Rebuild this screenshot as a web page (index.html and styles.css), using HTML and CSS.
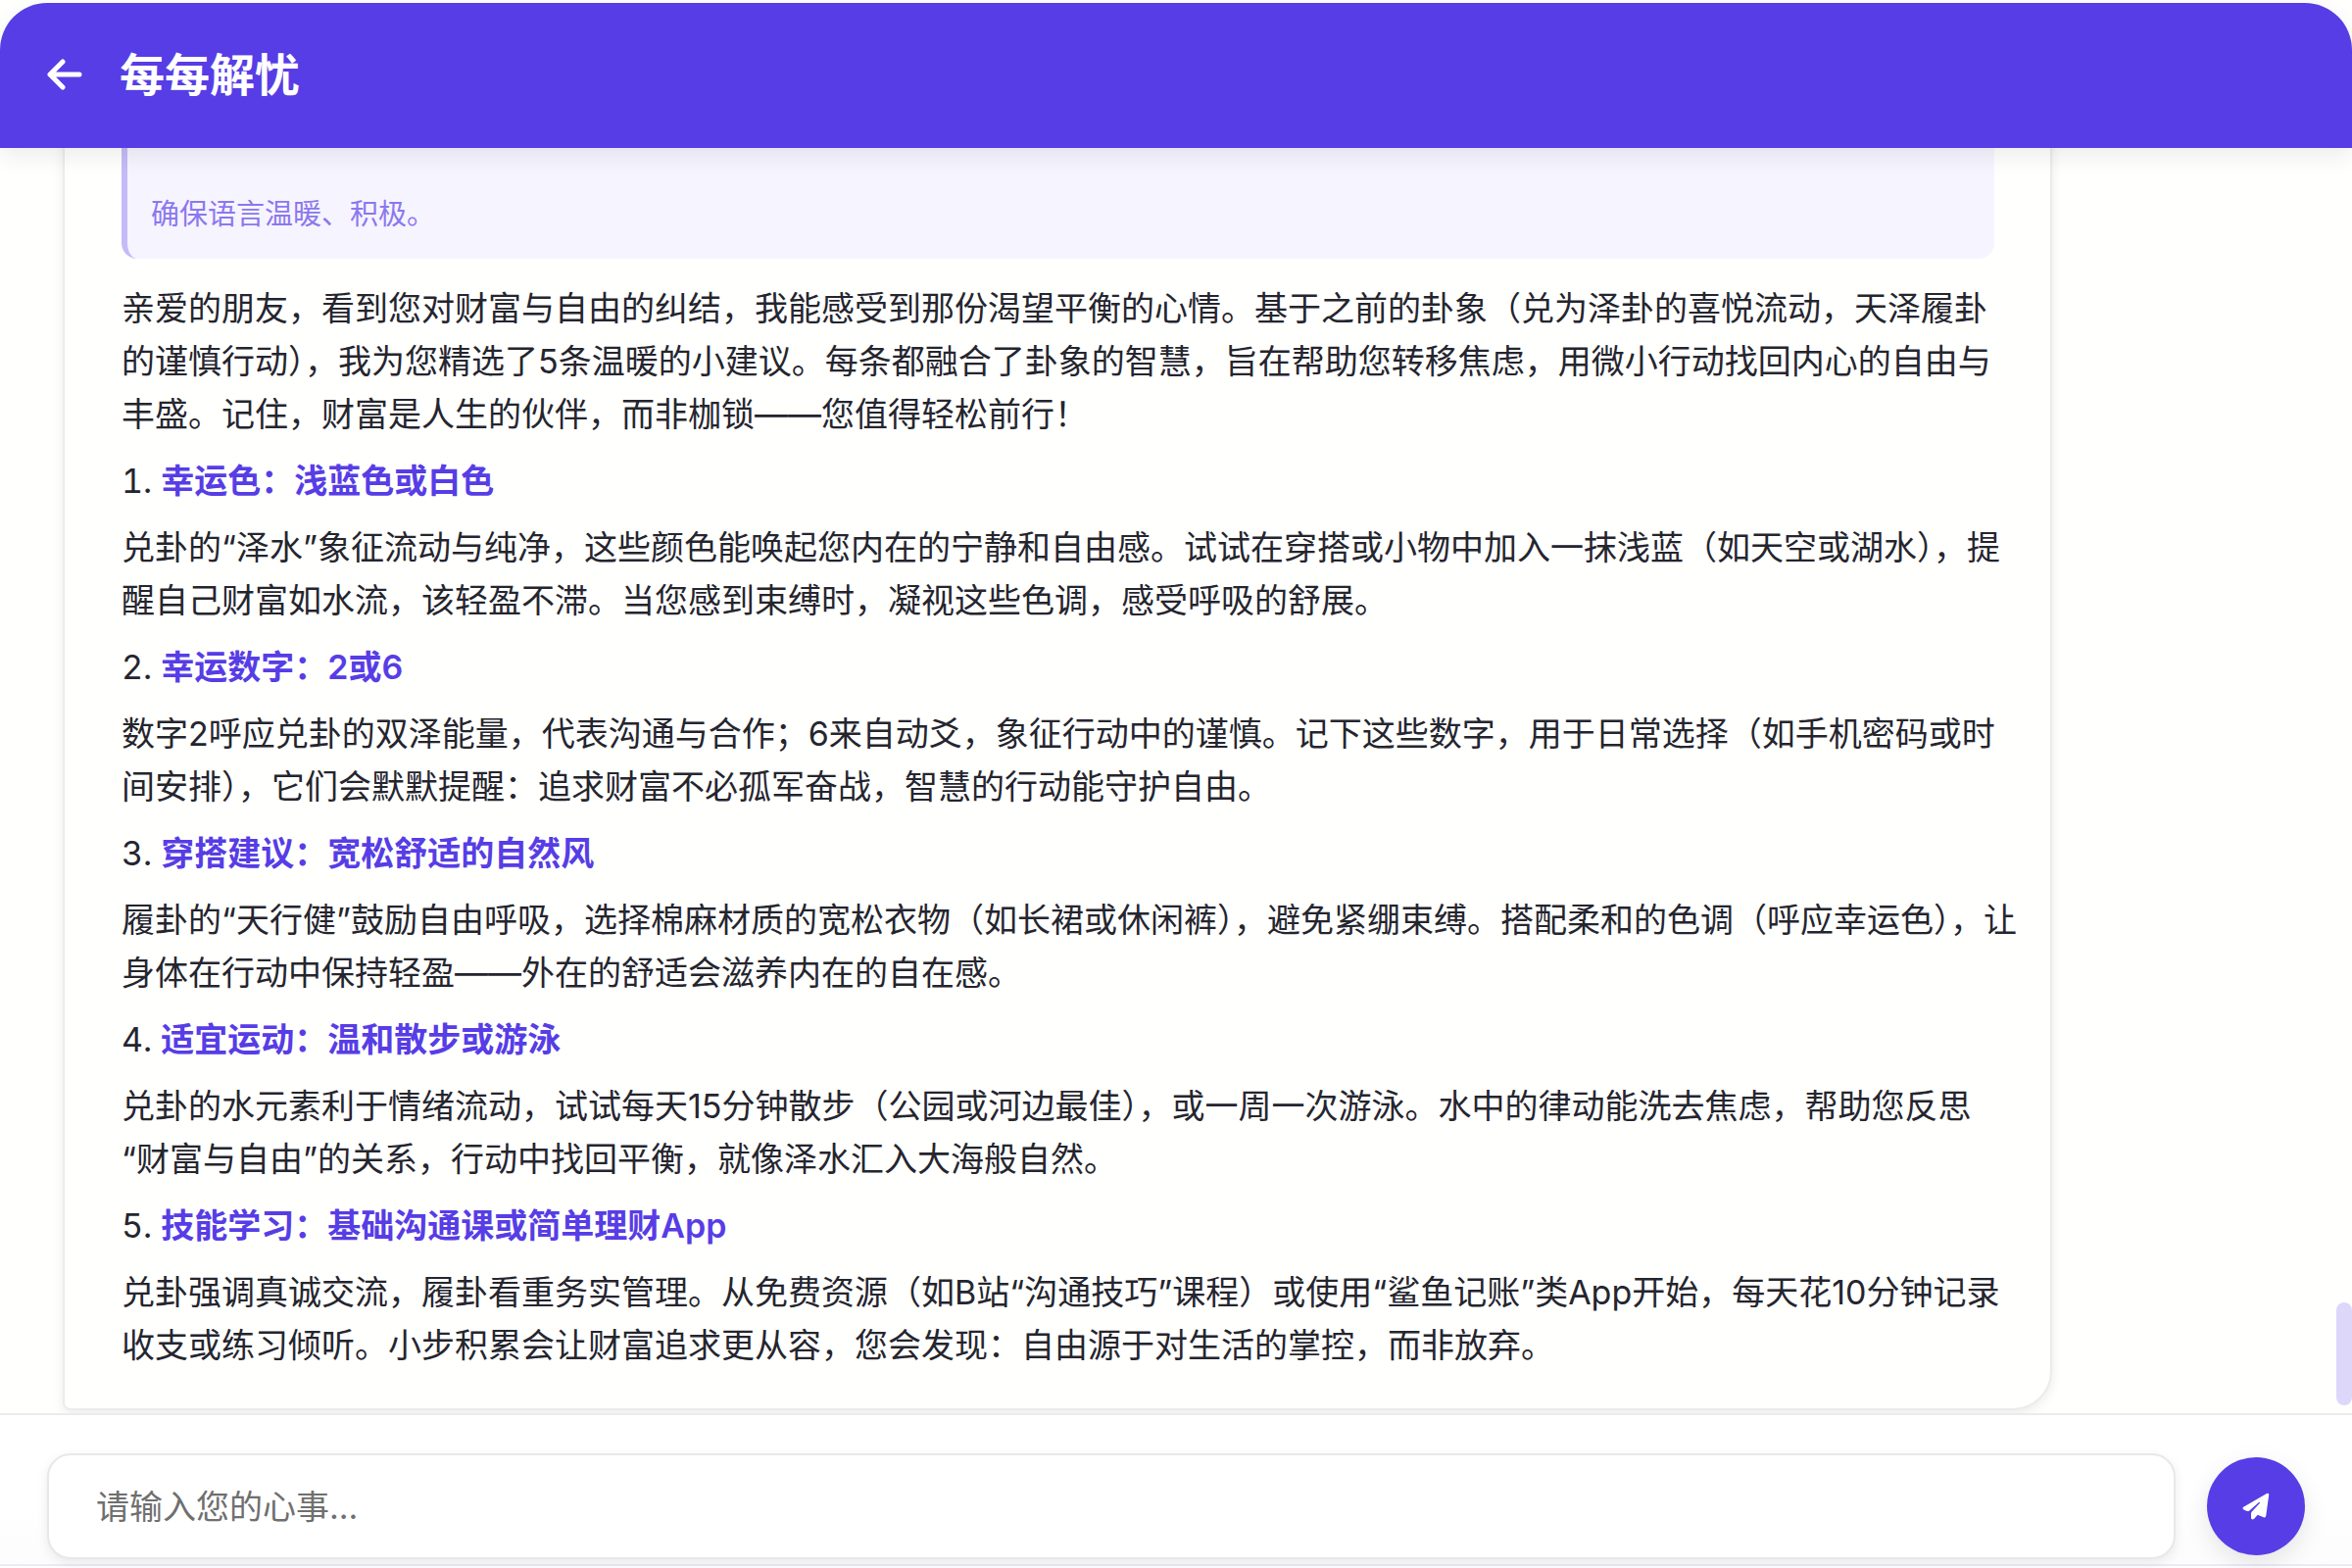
FILE: index.html
```html
<!DOCTYPE html>
<html lang="zh-CN">
<head>
    <meta charset="UTF-8">
    <meta name="viewport" content="width=device-width, initial-scale=1.0">
    <title>每每解忧</title>
    <link rel="stylesheet" href="styles.css">
</head>
<body>
    <div class="app">
        <header class="chat-header">
            <button type="button" class="back-btn" aria-label="返回">
                <svg viewBox="0 0 36 32" width="36" height="32">
                    <path d="M16 3 L3 16 L16 29 M3 16 H33" fill="none" stroke="#fff" stroke-width="5" stroke-linecap="round" stroke-linejoin="round"/>
                </svg>
            </button>
            <h1>每每解忧</h1>
        </header>

        <main class="chat-messages">
            <div class="message">
                <blockquote class="thinking">确保语言温暖、积极。</blockquote>
                <div class="message-content">
                    <p>亲爱的朋友，看到您对财富与自由的纠结，我能感受到那份渴望平衡的心情。基于之前的卦象（兑为泽卦的喜悦流动，天泽履卦的谨慎行动），我为您精选了5条温暖的小建议。每条都融合了卦象的智慧，旨在帮助您转移焦虑，用微小行动找回内心的自由与丰盛。记住，财富是人生的伙伴，而非枷锁——您值得轻松前行！</p>
                    <ol>
                        <li><strong>幸运色：浅蓝色或白色</strong></li>
                    </ol>
                    <p>兑卦的“泽水”象征流动与纯净，这些颜色能唤起您内在的宁静和自由感。试试在穿搭或小物中加入一抹浅蓝（如天空或湖水），提醒自己财富如水流，该轻盈不滞。当您感到束缚时，凝视这些色调，感受呼吸的舒展。</p>
                    <ol start="2">
                        <li><strong>幸运数字：2或6</strong></li>
                    </ol>
                    <p>数字2呼应兑卦的双泽能量，代表沟通与合作；6来自动爻，象征行动中的谨慎。记下这些数字，用于日常选择（如手机密码或时间安排），它们会默默提醒：追求财富不必孤军奋战，智慧的行动能守护自由。</p>
                    <ol start="3">
                        <li><strong>穿搭建议：宽松舒适的自然风</strong></li>
                    </ol>
                    <p>履卦的“天行健”鼓励自由呼吸，选择棉麻材质的宽松衣物（如长裙或休闲裤），避免紧绷束缚。搭配柔和的色调（呼应幸运色），让身体在行动中保持轻盈——外在的舒适会滋养内在的自在感。</p>
                    <ol start="4">
                        <li><strong>适宜运动：温和散步或游泳</strong></li>
                    </ol>
                    <p>兑卦的水元素利于情绪流动，试试每天15分钟散步（公园或河边最佳），或一周一次游泳。水中的律动能洗去焦虑，帮助您反思<br>“财富与自由”的关系，行动中找回平衡，就像泽水汇入大海般自然。</p>
                    <ol start="5">
                        <li><strong>技能学习：基础沟通课或简单理财App</strong></li>
                    </ol>
                    <p>兑卦强调真诚交流，履卦看重务实管理。从免费资源（如B站“沟通技巧”课程）或使用“鲨鱼记账”类App开始，每天花10分钟记录收支或练习倾听。小步积累会让财富追求更从容，您会发现：自由源于对生活的掌控，而非放弃。</p>
                </div>
            </div>
            <div class="scroll-thumb"></div>
        </main>

        <form class="chat-input">
            <input type="text" id="message" aria-label="请输入您的心事" placeholder="请输入您的心事...">
            <button type="button" class="send-btn" aria-label="发送">
                <svg viewBox="0 0 28 28" width="28" height="28">
                    <path d="M25 1 Q27.400 0 27.200 2.500 L24.200 24 Q23.800 26 21.800 25.300 L15.700 22.800 L12.200 26.700 Q9.200 28.500 9 25.500 V21.500 Q9 20.500 9.800 19.600 L18 10.800 Q18.400 9.600 17 10 L7 18.700 Q6 19.300 5 18.900 L1.500 17.400 Q-.300 16 1.300 14.700 Z" fill="#fff"/>
                </svg>
            </button>
        </form>
    </div>
</body>
</html>
```
FILE: styles.css
```css
* {
    box-sizing: border-box;
}

body {
    margin: 0;
    font-family: Inter, "Noto Sans CJK SC", sans-serif;
    background-color: #fffffd;
    color: #25252f;
}

.app {
    display: flex;
    flex-direction: column;
    height: 100vh;
    padding-top: 3px;
    overflow: hidden;
}

.chat-header {
    display: flex;
    align-items: center;
    gap: 38px;
    height: 148px;
    flex-shrink: 0;
    padding: 0 48px 2px;
    border-radius: 48px 48px 0 0;
    background-color: #573de6;
    color: #fff;
    box-shadow: 0 8px 24px rgba(0, 0, 0, 0.08);
    z-index: 1;
}

.chat-header h1 {
    margin: 0;
    font-size: 46px;
    line-height: 64px;
    font-weight: 700;
}

.back-btn {
    display: flex;
    padding: 0;
    border: none;
    background: none;
    cursor: pointer;
}

/* the newest message stays at the bottom */
.chat-messages {
    position: relative;
    display: flex;
    flex: 1;
    min-height: 0;
    flex-direction: column;
    justify-content: flex-end;
    padding: 0 306px 3px 64px;
    overflow: hidden;
}

.message {
    padding: 40px 57px 37px 58px;
    border: 2px solid #ececec;
    border-radius: 40px 40px 40px 8px;
    background-color: #fffffd;
    box-shadow: 0 4px 12px rgba(0, 0, 0, 0.08);
}

.thinking {
    margin: 0 0 24px;
    padding: 80px 24px 22px;
    border-left: 6px solid #c5bbf6;
    border-radius: 16px;
    background-color: #f6f4ff;
    color: #8b78ed;
    font-size: 29px;
    line-height: 46px;
}

.message-content {
    margin-right: -24px;
    font-size: 34px;
    line-height: 54px;
}

.message-content p,
.message-content ol {
    margin: 0 0 14px;
}

.message-content ol {
    padding: 0;
    list-style-position: inside;
}

.message-content p:last-child {
    margin-bottom: 0;
}

.message-content strong {
    font-weight: 600;
    color: #573de6;
}

.scroll-thumb {
    position: absolute;
    right: 0;
    bottom: 8px;
    width: 16px;
    height: 105px;
    border-radius: 8px;
    background-color: #ddd7fa;
}

.chat-input {
    display: flex;
    align-items: center;
    gap: 32px;
    flex-shrink: 0;
    padding: 39px 48px 5px;
    border-top: 2px solid #ebebeb;
    border-bottom: 2px solid #ebe9fb;
    margin-bottom: 2px;
    background: linear-gradient(#fff 60%, #fcfcfc);
}

.chat-input input {
    flex: 1;
    min-width: 0;
    height: 108px;
    padding: 0 48px;
    border: 2px solid #e8e8e8;
    border-radius: 24px;
    background-color: #fff;
    box-shadow: 0 4px 12px rgba(0, 0, 0, 0.08);
    font-family: inherit;
    font-size: 34px;
    color: #25252f;
}

.chat-input input::placeholder {
    color: #6f6f6f;
}

.send-btn {
    display: flex;
    align-items: center;
    justify-content: center;
    width: 100px;
    height: 100px;
    padding: 0;
    border: none;
    border-radius: 50%;
    background-color: #573de6;
    box-shadow: 0 8px 24px rgba(0, 0, 0, 0.1);
    cursor: pointer;
}
```
